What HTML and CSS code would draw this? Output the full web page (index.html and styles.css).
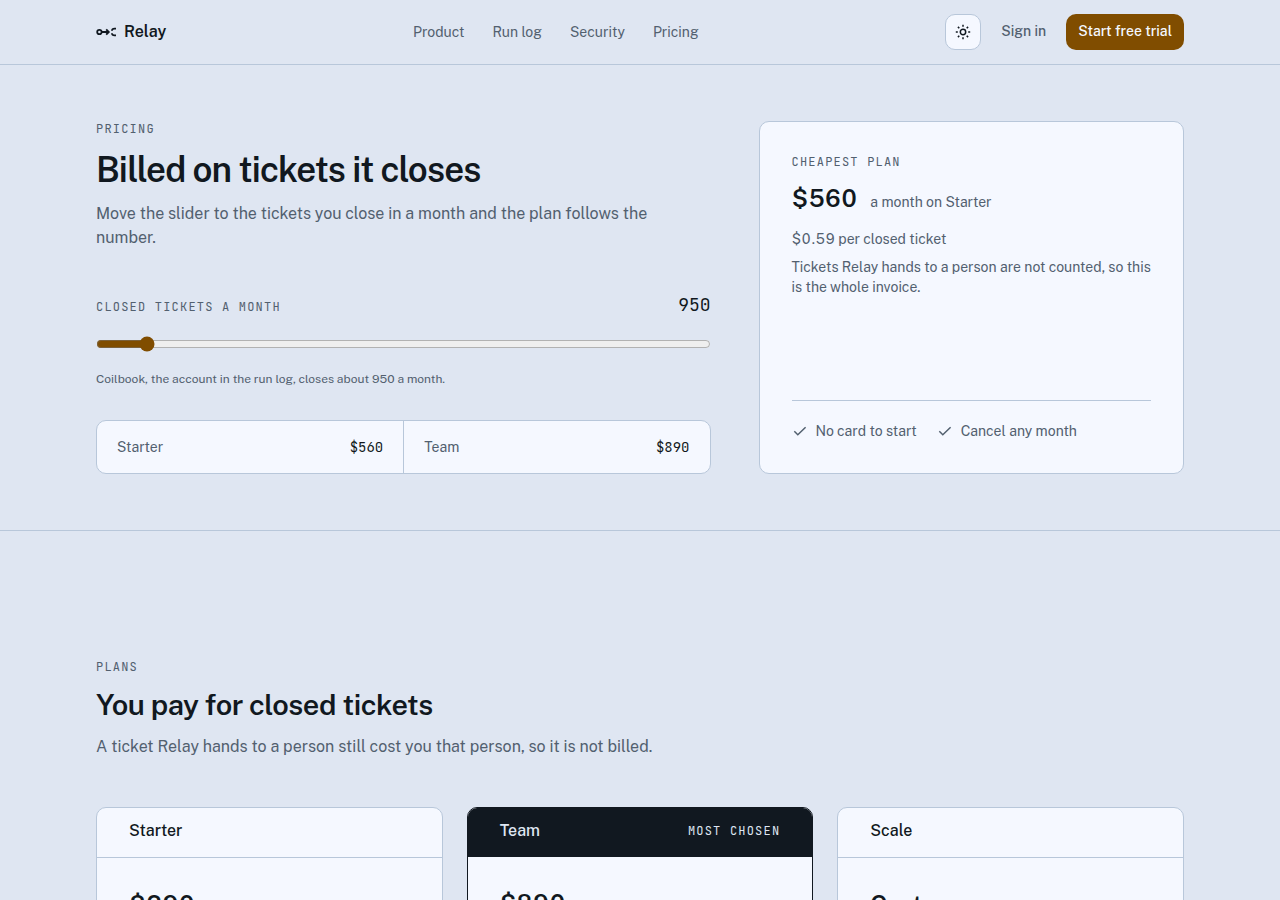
FILE: index.html
```html
<!DOCTYPE html>
<html lang="en">
<head>
    <meta charset="UTF-8">
    <meta name="viewport" content="width=device-width, initial-scale=1.0">
    <title>Relay - Pricing</title>
    <link rel="stylesheet" href="styles.css">
</head>
<body>
    <header class="topbar">
        <div class="wrap topbar-inner">
            <a class="brand" href="#">
                <svg class="logo" viewBox="0 0 20 20" width="20" height="20" aria-hidden="true">
                    <circle cx="3.4" cy="10" r="2.2"/>
                    <path d="M5.8 10h6.8M10.2 7.4 12.8 10l-2.6 2.6"/>
                    <path d="M20 6.6h-1.5c-1.5 0-2.5.8-2.6 2.1M20 13.4h-1.5c-1.5 0-2.5-.8-2.6-2.1"/>
                </svg>
                <span>Relay</span>
            </a>
            <nav class="nav">
                <a href="#">Product</a>
                <a href="#">Run log</a>
                <a href="#">Security</a>
                <a href="#">Pricing</a>
            </nav>
            <div class="actions">
                <button class="theme" type="button" aria-label="Switch theme">
                    <svg viewBox="0 0 16 16" width="16" height="16" aria-hidden="true">
                        <circle cx="8" cy="8" r="2.7"/>
                        <path d="M8 .8v2M8 13.2v2M.8 8h2M13.2 8h2M2.9 2.9l1.4 1.4M11.7 11.7l1.4 1.4M2.9 13.1l1.4-1.4M11.7 4.3l1.4-1.4"/>
                    </svg>
                </button>
                <a class="signin" href="#">Sign in</a>
                <button class="cta" type="button">Start free trial</button>
            </div>
        </div>
    </header>

    <main>
        <section class="hero">
            <div class="wrap hero-grid">
                <div class="calc">
                    <p class="eyebrow">Pricing</p>
                    <h1>Billed on tickets it closes</h1>
                    <p class="lead">Move the slider to the tickets you close in a month and the plan follows the number.</p>
                    <div class="slider-head">
                        <label class="eyebrow" for="tickets">Closed tickets a month</label>
                        <output class="count" id="count" for="tickets">950</output>
                    </div>
                    <input class="slider" type="range" id="tickets" min="100" max="12000" step="50" value="950">
                    <p class="hint">Coilbook, the account in the run log, closes about 950 a month.</p>
                    <dl class="compare">
                        <div>
                            <dt>Starter</dt>
                            <dd>$560</dd>
                        </div>
                        <div>
                            <dt>Team</dt>
                            <dd>$890</dd>
                        </div>
                    </dl>
                </div>

                <aside class="quote">
                    <p class="eyebrow">Cheapest plan</p>
                    <p class="total"><strong>$560</strong> <span>a month on Starter</span></p>
                    <p class="rate">$0.59 per closed ticket</p>
                    <p class="note">Tickets Relay hands to a person are not counted, so this is the whole invoice.</p>
                    <ul class="perks">
                        <li>
                            <svg viewBox="0 0 16 16" width="16" height="16" aria-hidden="true"><path d="m2.3 8.3 3.5 3.5 7.8-7.5"/></svg>
                            No card to start
                        </li>
                        <li>
                            <svg viewBox="0 0 16 16" width="16" height="16" aria-hidden="true"><path d="m2.3 8.3 3.5 3.5 7.8-7.5"/></svg>
                            Cancel any month
                        </li>
                    </ul>
                </aside>
            </div>
        </section>

        <section class="plans">
            <div class="wrap">
                <p class="eyebrow">Plans</p>
                <h2>You pay for closed tickets</h2>
                <p class="lead">A ticket Relay hands to a person still cost you that person, so it is not billed.</p>
                <div class="cards">
                    <article class="card">
                        <header class="card-head"><h3>Starter</h3></header>
                        <p class="price">$290</p>
                    </article>
                    <article class="card chosen">
                        <header class="card-head"><h3>Team</h3><span class="eyebrow">Most chosen</span></header>
                        <p class="price">$890</p>
                    </article>
                    <article class="card">
                        <header class="card-head"><h3>Scale</h3></header>
                        <p class="price">Custom</p>
                    </article>
                </div>
            </div>
        </section>
    </main>

    <script>
        const tickets = document.getElementById("tickets");
        tickets.addEventListener("input", function() {
            document.getElementById("count").textContent = Number(tickets.value).toLocaleString("en-US");
        });
    </script>
</body>
</html>
```
FILE: styles.css
```css
:root {
    --bg: #dfe6f2;
    --surface: #f5f8ff;
    --line: #b8c7da;
    --ink: #111820;
    --muted: #52606f;
    --accent: #804d00;
    --mono: "JetBrains Mono", "Liberation Mono", monospace;
}
* {
    box-sizing: border-box;
}
body {
    margin: 0;
    background: var(--bg);
    color: var(--ink);
    font-family: "Public Sans", "Open Sans", sans-serif;
    font-size: 14px;
    line-height: 20px;
    -webkit-font-smoothing: antialiased;
}
h1, h2, h3, p, ul, dl, dd {
    margin: 0;
    padding: 0;
}
a {
    color: inherit;
    text-decoration: none;
}
button {
    font: inherit;
    cursor: pointer;
}
svg {
    fill: none;
    stroke: currentColor;
    flex: none;
}
.wrap {
    max-width: 1152px;
    margin: 0 auto;
    padding: 0 32px;
}

/* top bar */
.topbar {
    border-bottom: 1px solid var(--line);
}
.topbar-inner {
    display: flex;
    justify-content: space-between;
    align-items: center;
    height: 64px;
}
.brand {
    display: flex;
    align-items: center;
    gap: 8px;
    font-size: 16px;
    font-weight: 600;
}
.logo {
    stroke-width: 1.8;
}
.nav {
    display: flex;
    gap: 28px;
    color: var(--muted);
}
.actions {
    display: flex;
    align-items: center;
    gap: 20px;
}
.theme {
    display: grid;
    place-items: center;
    width: 36px;
    height: 36px;
    padding: 0;
    border: 1px solid var(--line);
    border-radius: 10px;
    background: var(--surface);
    color: var(--ink);
}
.theme svg {
    stroke-width: 1.5;
}
.signin {
    padding-bottom: 2px;
    color: var(--muted);
    font-weight: 500;
}
.cta {
    height: 36px;
    padding: 0 12px 2px;
    border: 0;
    border-radius: 10px;
    background: var(--accent);
    color: var(--surface);
    font-weight: 500;
}

/* calculator */
.hero {
    padding: 56px 0;
    border-bottom: 1px solid var(--line);
}
.hero-grid {
    display: grid;
    grid-template-columns: 13fr 9fr;
    gap: 48px;
}
.eyebrow {
    font-family: var(--mono);
    font-size: 12px;
    line-height: 16px;
    letter-spacing: 0.1em;
    text-transform: uppercase;
    color: var(--muted);
}
h1, h2, .total strong, .price {
    font-weight: 600;
    letter-spacing: -0.015em;
}
h1 {
    margin-top: 12px;
    font-size: 35px;
    line-height: 41px;
    letter-spacing: -0.025em;
}
.lead {
    max-width: 580px;
    margin-top: 12px;
    font-size: 16px;
    line-height: 24px;
    color: var(--muted);
}
.slider-head {
    display: flex;
    justify-content: space-between;
    align-items: baseline;
    margin-top: 40px;
}
.count {
    font-family: var(--mono);
    font-size: 18px;
    line-height: 30px;
}
.slider {
    display: block;
    width: 100%;
    margin: 16px 0 0;
    accent-color: var(--accent);
}
.hint {
    margin-top: 18px;
    font-size: 12px;
    line-height: 18px;
    color: var(--muted);
}
.compare {
    display: grid;
    grid-template-columns: 1fr 1fr;
    margin-top: 32px;
    border: 1px solid var(--line);
    border-radius: 10px;
    background: var(--surface);
}
.compare div {
    display: flex;
    justify-content: space-between;
    padding: 16px 20px;
}
.compare div + div {
    border-left: 1px solid var(--line);
}
.compare dt {
    color: var(--muted);
}
.compare dd {
    font-family: var(--mono);
}

/* result */
.quote {
    display: flex;
    flex-direction: column;
    padding: 32px;
    border: 1px solid var(--line);
    border-radius: 10px;
    background: var(--surface);
    color: var(--muted);
}
.total {
    display: flex;
    align-items: baseline;
    gap: 13px;
    margin-top: 14px;
}
.total strong, .price {
    color: var(--ink);
    font-size: 24px;
    line-height: 28px;
    font-variant-numeric: tabular-nums;
}
.rate {
    margin-top: 17px;
    font-variant-numeric: tabular-nums;
}
.note {
    margin-top: 8px;
}
.perks {
    display: flex;
    flex-wrap: wrap;
    gap: 8px 20px;
    margin-top: auto;
    padding-top: 20px;
    border-top: 1px solid var(--line);
    list-style: none;
}
.perks li {
    display: flex;
    align-items: center;
    gap: 8px;
}
.perks svg {
    stroke-width: 1.5;
}

/* plans */
.plans {
    padding: 128px 0;
}
h2 {
    margin-top: 12px;
    font-size: 29px;
    line-height: 36px;
}
.cards {
    display: grid;
    grid-template-columns: repeat(3, 1fr);
    gap: 24px;
    margin-top: 48px;
}
.card {
    overflow: hidden;
    border: 1px solid var(--line);
    border-radius: 10px;
    background: var(--surface);
}
.card-head {
    display: flex;
    justify-content: space-between;
    align-items: center;
    padding: 11px 32px 14px;
    border-bottom: 1px solid var(--line);
}
h3 {
    font-size: 16px;
    line-height: 24px;
    font-weight: 500;
}
.chosen {
    border-color: var(--ink);
}
.chosen .card-head {
    border-bottom: 0;
    background: var(--ink);
}
.chosen .card-head, .chosen .eyebrow {
    color: var(--bg);
}
.price {
    padding: 32px;
}
```
